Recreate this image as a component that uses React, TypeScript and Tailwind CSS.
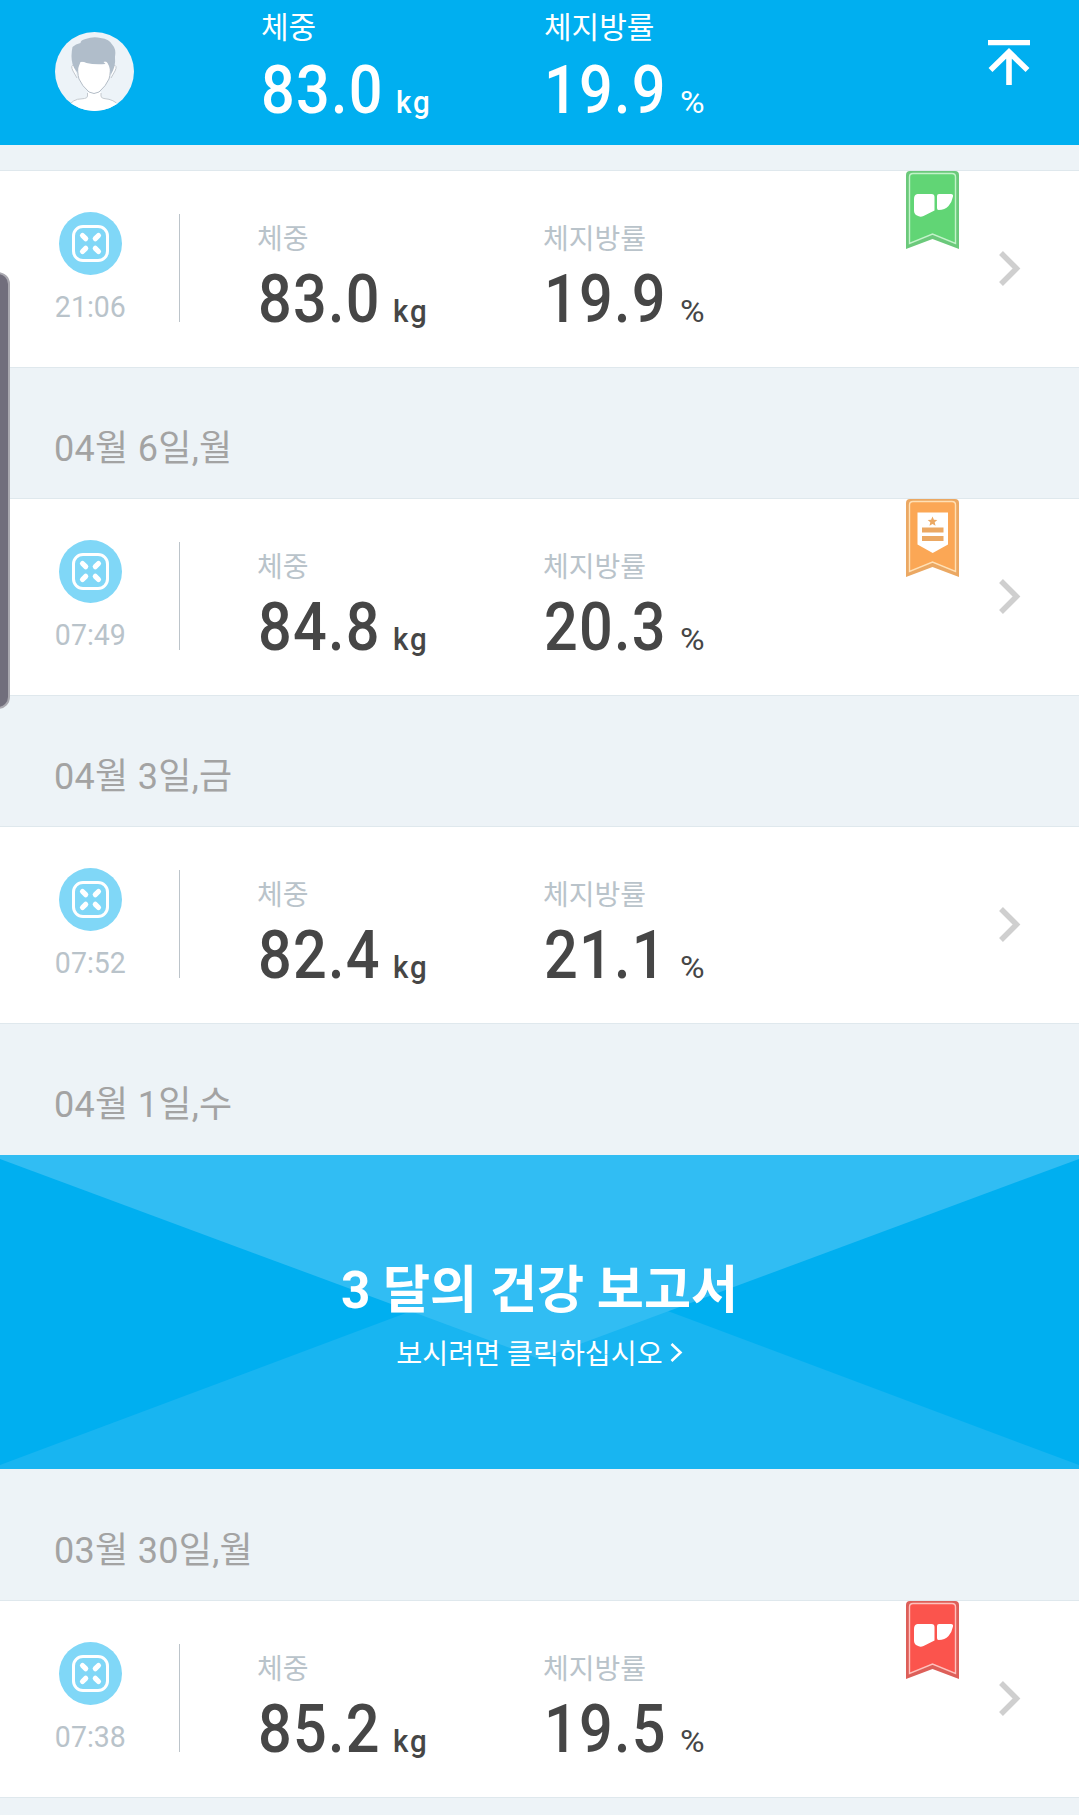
import React from 'react';

type Badge = 'green' | 'orange' | 'red';

interface Entry {
  time: string;
  weight: string;
  fat: string;
  badge?: Badge;
}

const BADGE_COLORS: Record<Badge, { fill: string; edge: string; line: string }> = {
  green: { fill: '#61d575', edge: '#6bc97b', line: '#c3f3ca' },
  orange: { fill: '#fba755', edge: '#eba863', line: '#ffe0b5' },
  red: { fill: '#fb544d', edge: '#dd5f59', line: '#ffc1bd' },
};

function Avatar() {
  return (
    <svg width="79" height="79" viewBox="0 0 79 79">
      <defs>
        <clipPath id="avatar-clip">
          <circle cx="39.5" cy="39.5" r="39.5" />
        </clipPath>
      </defs>
      <g clipPath="url(#avatar-clip)">
        <rect width="79" height="79" fill="#edf3f8" />
        <path d="M33 60v3q0 2-3 3l-7 1q-5 1-8 5v7h48v-7q-3-3-7-4l-7-2q-3-1-3-3v-3z" fill="#fff" />
        <path d="M32.5 61v3q0 2-3 2.500l-7 .8q-4 1-7 4.200M46 61v3q0 2 3 2.500l5 .8q4 1 7.500 3.700" fill="none" stroke="#c2c8ce" />
        <path d="M19 33q-4 0-1 6l4 7M58 33q5 0 2 6l-4 7" fill="#fff" stroke="#c2c8ce" />
        <path d="M23 29q-1 12 1 18 3 7 10 13 5 3 10 0 7-6 10-13 2-6 1-18z" fill="#fff" stroke="#b3bcc6" />
        <path d="M17.500 32q-2-8 0-17 3-3 8-4 0-3 5-4 8-3 15-1 9 1 12 7 4 4 2.500 12 1 10-4.500 18 0-7-3-12-2-3-4-1l2 2q-11 1-19-1-4-2-6-1-3 6-3 11-4-5-5-9" fill="#b0bdca" />
      </g>
    </svg>
  );
}

function ToTopIcon() {
  return (
    <svg width="42" height="46" viewBox="0 0 42 46" fill="none" stroke="#fff">
      <path d="M0 2.700h42" strokeWidth="5.300" />
      <path d="M2.500 30 21 12 39.500 30M21 12v33" strokeWidth="5.600" />
    </svg>
  );
}

function ScaleIcon() {
  return (
    <svg width="63" height="63" viewBox="0 0 63 63">
      <circle cx="31.500" cy="31.500" r="31.500" fill="#80d7f7" />
      <g fill="none" stroke="#fff" strokeLinecap="round">
        <rect x="14.500" y="14.500" width="34" height="34" rx="9.500" strokeWidth="3" />
        <path d="m23.500 23.500 3.200 3.200M39.500 23.500l-3.200 3.200M23.500 39.500l3.200-3.200M39.500 39.500l-3.200-3.200" strokeWidth="5.200" />
      </g>
    </svg>
  );
}

function Ribbon({ badge }: { badge: Badge }) {
  const c = BADGE_COLORS[badge];
  return (
    <svg width="53" height="78" viewBox="0 0 53 78" className="absolute top-0 right-[120px]">
      <path d="M0 78V4q0-4 4-4h45q4 0 4 4v74L26.500 68z" fill={c.edge} />
      <path d="M3.500 72.500V6q0-3.500 3.500-3.500h39q3.500 0 3.500 3.500v66.500L26.500 63z" fill={c.fill} stroke={c.line} strokeWidth="1.400" />
      {badge === 'orange' ? (
        <>
          <path d="M11.500 13.500h30.500v32L26.700 54 11.500 45.500z" fill="#fff" />
          <path d="m26.500 17.500 1.400 3.200 3.400.3-2.600 2.300.8 3.400-3-1.800-3 1.800.8-3.400-2.600-2.300 3.400-.3z" fill="#eba863" />
          <path d="M16 31h21.500M16 39.500h21.500" stroke="#eba863" strokeWidth="4.800" />
        </>
      ) : (
        <g fill="#fff">
          <path d="M11.500 23h14q3 0 3 3v13.500l-11 5.500q-3.500 1.500-6.500-.5-3-1.500-3-5V28q0-4.500 3.500-5z" />
          <path d="M33 23h12q2.500 0 2 2.500-1.200 6-4.500 9.500-3.500 3.800-10 4-1.500 0-1.500-2V25q0-2 2-2z" />
        </g>
      )}
    </svg>
  );
}

function Metric({ value, unit }: { value: string; unit: string }) {
  return (
    <div className="flex items-baseline whitespace-nowrap">
      <span className="origin-left scale-x-90 text-[66px] leading-[66px] font-medium tracking-[1.4px]">{value}</span>
      {unit === '%' ? (
        <span className="origin-left scale-x-105 text-[32px] leading-[32px]">%</span>
      ) : (
        <span className="-ml-px origin-left scale-x-95 text-[31px] leading-[32px] font-medium tracking-[2px]">{unit}</span>
      )}
    </div>
  );
}

function EntryCard({ time, weight, fat, badge }: Entry) {
  return (
    <div className="relative flex h-[198px] border-y border-[#dfe8ed] bg-white">
      <div className="flex w-[180px] items-start pt-[43px]">
        <div className="flex w-full flex-col items-center pl-[2px]">
          <div className="-mt-0.5">
            <ScaleIcon />
          </div>
          <span className="mt-[17px] scale-x-95 text-[30px] leading-[30px] text-[#b9c3ca]">{time}</span>
        </div>
        <div className="h-[108px] w-px shrink-0 bg-[#bcc4ca]" />
      </div>
      <div className="w-[286px] pt-[54px] pl-[77px] text-[#464646]">
        <div className="text-[28px] leading-[30px] text-[#b9c3ca]">체중</div>
        <div className="mt-[12px] pl-px">
          <Metric value={weight} unit="kg" />
        </div>
      </div>
      <div className="w-[300px] pt-[54px] pl-[77px] text-[#464646]">
        <div className="text-[28px] leading-[30px] text-[#b9c3ca]">체지방률</div>
        <div className="mt-[12px] pl-px">
          <Metric value={fat} unit="%" />
        </div>
      </div>
      {badge && <Ribbon badge={badge} />}
      <svg width="22" height="35" viewBox="0 0 22 35" className="mt-[80px] mr-[58px] ml-auto">
        <path d="M2 2 17.500 17.500 2 33" fill="none" stroke="#cfcfcf" strokeWidth="5.500" />
      </svg>
    </div>
  );
}

function DateRow({ label }: { label: string }) {
  return (
    <div className="h-[130px] pt-[61px] pl-[54px] text-[36px] leading-[40px] tracking-[0.3px] text-[#a3a3a3]">{label}</div>
  );
}

function ReportBanner() {
  return (
    <div className="relative mt-px mb-px h-[314px] bg-[#00aff0] text-white">
      <svg className="absolute inset-0" width="1079" height="314" viewBox="0 0 1079 314">
        <path d="M0 310 539.500 108 1079 310v4H0z" fill="#18b5f1" />
        <path d="M0 0h1079v4L539.500 204 0 4z" fill="#31bdf3" />
      </svg>
      <div className="relative flex flex-col items-center pt-[106px]">
        <h2 className="text-[51.200px] leading-[60px] font-bold">3 달의 건강 보고서</h2>
        <p className="mt-[18px] flex items-center gap-[7px] text-[28.200px] leading-[32px]">
          보시려면 클릭하십시오
          <svg width="13" height="19" viewBox="0 0 13 19" fill="none" stroke="#fff" strokeWidth="2.600" className="-mt-[5px]">
            <path d="m1.500 1 9 8.500-9 8.500" />
          </svg>
        </p>
      </div>
    </div>
  );
}

export default function App() {
  return (
    <div className="relative h-[1815px] w-[1079px] overflow-hidden bg-[#edf3f7] font-['Roboto','Noto_Sans_CJK_KR',sans-serif]">
      <header className="flex h-[145px] bg-[#00aff0] text-white">
        <div className="w-[261px] pt-[32px] pl-[55px]">
          <Avatar />
        </div>
        <div className="w-[283px] pt-[12px]">
          <div className="text-[30px] leading-[32px]">체중</div>
          <div className="mt-[14px]">
            <Metric value="83.0" unit="kg" />
          </div>
        </div>
        <div className="pt-[12px]">
          <div className="text-[30px] leading-[32px]">체지방률</div>
          <div className="mt-[14px]">
            <Metric value="19.9" unit="%" />
          </div>
        </div>
        <div className="mt-[40px] mr-[49px] ml-auto">
          <ToTopIcon />
        </div>
      </header>

      <main className="pt-[25px]">
        <EntryCard time="21:06" weight="83.0" fat="19.9" badge="green" />
        <DateRow label="04월 6일,월" />
        <EntryCard time="07:49" weight="84.8" fat="20.3" badge="orange" />
        <DateRow label="04월 3일,금" />
        <EntryCard time="07:52" weight="82.4" fat="21.1" />
        <DateRow label="04월 1일,수" />
        <ReportBanner />
        <DateRow label="03월 30일,월" />
        <EntryCard time="07:38" weight="85.2" fat="19.5" badge="red" />
      </main>

      {/* Edge panel handle */}
      <div className="absolute top-[272px] left-[-21px] h-[437px] w-[31px] rounded-[12px] border-2 border-[#aaa9b0] bg-[#716e7c]" />
    </div>
  );
}
